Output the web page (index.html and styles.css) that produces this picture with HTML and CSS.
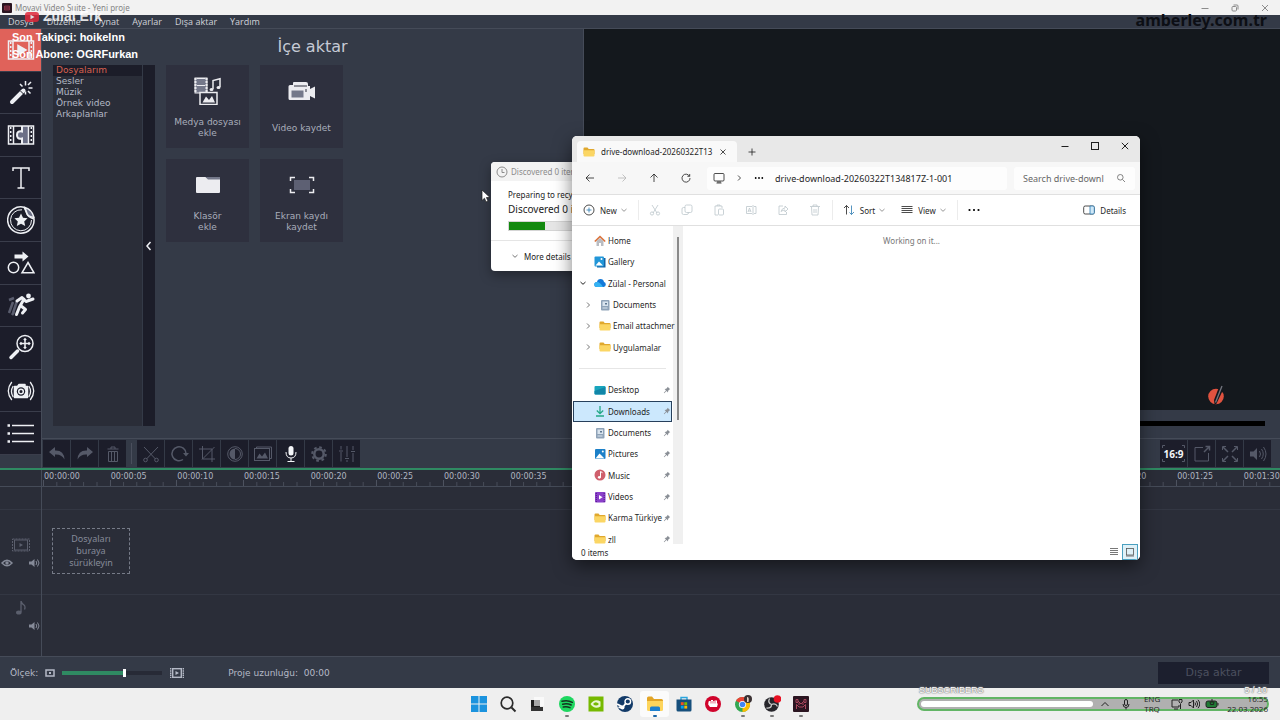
FILE: index.html
```html
<!DOCTYPE html>
<html lang="tr">
<head>
  <meta charset="UTF-8">
  <title>Movavi Video Suite - Yeni proje</title>
  <meta name="viewport" content="width=device-width, initial-scale=1.0">
  <link rel="stylesheet" href="styles.css">
</head>
<body>

  <!-- Shared icons -->
  <svg class="sprite" aria-hidden="true">
    <symbol id="folder" viewBox="0 0 12 12">
      <path d="M.5 2.500q0-1 1-1h3l1.200 1.500h4.800q1 0 1 1V8H.5z" fill="#e0a82e"/>
      <path d="M.5 4.200h11v5.300q0 1-1 1h-9q-1 0-1-1z" fill="#fbd664"/>
    </symbol>
    <symbol id="pin" viewBox="0 0 10 10">
      <path d="M5.800 1l3.200 3.200-1 .3-1.500 1.500-.3 2L4.400 6.300 1.500 9 1 8.500l2.700-2.900L2 3.800l2-.3 1.500-1.500z" fill="#8a8f96"/>
    </symbol>
    <symbol id="doc" viewBox="0 0 12 12">
      <rect x="2" y="1" width="8.500" height="10.500" rx="1" fill="#8fa3b8"/>
      <rect x="3.500" y="2.500" width="5.500" height="4.500" fill="#d9e4ee"/>
      <path d="M6 4h2v1.500H6z" fill="#5d7690"/>
      <path d="M3.500 9h5" stroke="#d9e4ee"/>
    </symbol>
    <symbol id="speaker" viewBox="0 0 12 10">
      <path d="M1 3.500h2.500L6.500 1v8L3.500 6.500H1z" fill="currentColor"/>
      <path d="M8 3q1.500 2 0 4M9.500 1.500q3 3.500 0 7" fill="none" stroke="currentColor"/>
    </symbol>
    <symbol id="chev-down" viewBox="0 0 8 8"><path d="M1.500 3L4 5.300 6.500 3" fill="none" stroke="currentColor"/></symbol>
    <symbol id="chev-right" viewBox="0 0 8 8"><path d="M3 1.500L5.500 4 3 6.500" fill="none" stroke="currentColor"/></symbol>
  </svg>

  <header class="titlebar">
    <svg class="app-icon" viewBox="0 0 10 10"><rect width="10" height="10" rx="1" fill="#2a1520"/><path d="M2.500 3h5v4h-5zM4 3v4M6 3v4M2.500 5h5" fill="none" stroke="#a43a52" stroke-width=".7"/></svg>
    <span class="titlebar-text">Movavi Video Suite - Yeni proje</span>
    <div class="window-buttons">
      <button aria-label="Minimize"><svg viewBox="0 0 8 8"><path d="M.5 4.500h7"/></svg></button>
      <button aria-label="Restore"><svg viewBox="0 0 8 8"><rect x="1" y="2.500" width="4.500" height="4.500" rx="1"/><path d="M2.500 1h3.500q1 0 1 1v3.500"/></svg></button>
      <button aria-label="Close"><svg viewBox="0 0 8 8"><path d="M1 1l6 6M7 1L1 7"/></svg></button>
    </div>
  </header>

  <nav class="menubar">
    <button>Dosya</button>
    <button>Düzenle</button>
    <button>Oynat</button>
    <button>Ayarlar</button>
    <button>Dışa aktar</button>
    <button>Yardım</button>
  </nav>

  <main class="workspace">
    <aside class="tools">
      <button class="tool active" aria-label="İçe aktar">
        <svg viewBox="0 0 28 28"><rect x="1.500" y="5" width="25" height="18"/><path d="M6 5v18M22 5v18"/><path d="M3.700 6v16M24.300 6v16" stroke-dasharray="2 2"/><path d="M11 9.500l8 4.500-8 4.500z" fill="currentColor"/></svg>
      </button>
      <button class="tool" aria-label="Filtreler">
        <svg viewBox="0 0 28 28"><path d="M5 24L16.500 12.500" stroke-width="4" stroke-linecap="round"/><path d="M13.500 13l3 3" stroke="#1c1d2a" stroke-width="1"/><path d="M18.500 3v4.500M18.500 13.500v3M13 6l2.500 2.500M24 4l-3 3M21.500 10h4M21 13l2.500 2.500"/></svg>
      </button>
      <button class="tool" aria-label="Geçişler">
        <svg viewBox="0 0 28 28"><path d="M14 5h8v18h-8v-5q-4 2-4.500-3.500Q10 9 14 11z" fill="#6b6f86" stroke="none"/><rect x="1.500" y="5" width="25" height="18"/><path d="M3.700 6v16M24.300 6v16" stroke-dasharray="2 2"/><path d="M6.500 5v18M21.500 5v18"/><path d="M15 5v5.500q-5-1-5 3.500t5 3.500V23" stroke-width="2"/></svg>
      </button>
      <button class="tool" aria-label="Başlıklar">
        <svg viewBox="0 0 28 28"><path d="M6 7V4h16v3M14 4v20M10.500 24h7"/></svg>
      </button>
      <button class="tool" aria-label="Çıkartmalar">
        <svg viewBox="0 0 28 28"><path d="M17 1.200A13.200 13.200 0 1 0 27 13q-6-2-7-5t-3-6.800z"/><path d="M15 3.800A10.500 10.500 0 1 0 24.500 14" stroke-width="1"/><path d="M18 1.500q7 2 9 10-6-1-7-4z" fill="#6b6f86"/><path d="M14 7.500l2 4.300 4.600.5-3.400 3.200 1 4.500-4.200-2.300L9.800 20l1-4.500-3.400-3.200 4.600-.5z" fill="currentColor" stroke="none"/></svg>
      </button>
      <button class="tool" aria-label="Çağrılar">
        <svg viewBox="0 0 28 28"><path d="M7.500 5.500h8V2.500l6 5-6 5V9.500h-8z" fill="currentColor" stroke="none"/><circle cx="6.500" cy="18.500" r="5.200"/><path d="M21 13.500l6 10.300H15z"/></svg>
      </button>
      <button class="tool" aria-label="Animasyon">
        <svg viewBox="0 0 28 28"><path d="M2 9l5-2M6 11L2 22M10 10L6 22M5 24l2-3" stroke="#5a5d6e" stroke-width="2.500"/><circle cx="21.500" cy="5" r="2.400" fill="currentColor" stroke="none"/><path d="M10 10l5-3.500 4 4 7-2.500M17 8l-4.500 8-3 7.500M13.500 14.500l5 4-3 3.500" stroke-width="3" stroke-linecap="round" stroke-linejoin="round"/></svg>
      </button>
      <button class="tool" aria-label="Yakınlaştır">
        <svg viewBox="0 0 28 28"><circle cx="18" cy="9.500" r="8"/><path d="M18 5v9M13.500 9.500h9M16.800 6L18 4.800 19.200 6M16.800 13l1.200 1.200 1.200-1.200M14.500 8.300L13.300 9.500l1.200 1.200M21.500 8.300l1.200 1.200-1.200 1.200"/><path d="M10.500 17L4 23.500" stroke-width="3.500" stroke-linecap="round"/></svg>
      </button>
      <button class="tool" aria-label="Sabitleme">
        <svg viewBox="0 0 28 28"><path d="M7.500 9.500h3L12 7.500h6v2h2.500v11h-13z" fill="currentColor" stroke-linejoin="round"/><circle cx="14" cy="14.500" r="4.200" fill="#1c1d2a" stroke="none"/><circle cx="14" cy="14.500" r="2.300"/><path d="M4.800 5q-7 9 0 18M6.200 9q-3.500 5.500 0 11M23.200 5q7 9 0 18M21.800 9q3.500 5.500 0 11" stroke-width="1.300"/></svg>
      </button>
      <button class="tool" aria-label="Daha fazla">
        <svg viewBox="0 0 28 28"><path d="M5 6.500h22M5 14.500h22M5 22.500h22"/><path d="M.5 6.500H3M.5 14.500H3M.5 22.500H3" stroke-width="2.500"/></svg>
      </button>
    </aside>

    <div class="content">
      <div class="panels">
        <section class="import-panel">
          <h1>İçe aktar</h1>
          <div class="import-body">
            <ul class="category-list">
              <li class="selected">Dosyalarım</li>
              <li>Sesler</li>
              <li>Müzik</li>
              <li>Örnek video</li>
              <li>Arkaplanlar</li>
            </ul>
            <button class="collapse" aria-label="Daralt"><svg viewBox="0 0 8 10"><path d="M5.500 1L2 5l3.500 4"/></svg></button>
            <div class="cards">
              <button class="card">
                <svg viewBox="0 0 28 28"><rect x="1" y="1" width="12" height="15" fill="#74788a"/><path d="M1.500 1v15M12.500 1v15" stroke-dasharray="2 1" stroke-width="2"/><path d="M3 8.500h8M3 1.500h8"/><path d="M19 12V3.500l7-1.800V10" stroke-width="1.500"/><path d="M15.500 12.500a2 1.600 0 1 0 4 0a2 1.600 0 1 0-4 0M22.500 10.500a2 1.600 0 1 0 4 0a2 1.600 0 1 0-4 0" fill="currentColor" stroke="none"/><rect x="6" y="15.500" width="17" height="12" fill="#2e303e" stroke-width="1.500"/><path d="M8.500 25.500l3.500-6 3 3.500 3-4 3 6.500z" fill="currentColor" stroke="none"/></svg>
                <span>Medya dosyası<br>ekle</span>
              </button>
              <button class="card">
                <svg viewBox="0 0 28 28"><path d="M2 8h3V6q0-1 1-1h12q2 0 2 2v2h2v3l5-2.500v12L22 19v4H2q-1.500 0-1.500-1.500V9.500Q.5 8 2 8z" fill="currentColor" stroke="none"/><rect x="3.500" y="13.500" width="12" height="7" fill="#74788a" stroke="none"/><path d="M6 9h13M18 12v3" stroke="#2e303e" stroke-width="1"/></svg>
                <span>Video kaydet</span>
              </button>
              <button class="card">
                <svg viewBox="0 0 28 28"><path d="M12 6h14v4H14z" fill="#74788a" stroke="none"/><path d="M2 7q0-1 1-1h8.500l2.500 2.500h12V21q0 1-1 1H3q-1 0-1-1z" fill="currentColor" stroke="none"/></svg>
                <span>Klasör<br>ekle</span>
              </button>
              <button class="card">
                <svg viewBox="0 0 28 28"><rect x="6" y="9" width="16" height="10" fill="#5d6073" stroke="none"/><path d="M2.500 10V6.500H7M21 6.500h4.500V10M25.500 18v3.500H21M7 21.500H2.500V18" stroke-width="1.500"/></svg>
                <span>Ekran kaydı<br>kaydet</span>
              </button>
            </div>
          </div>
        </section>

        <section class="preview">
          <div class="screen">
            <svg class="brand" viewBox="0 0 20 20"><circle cx="10" cy="11.500" r="7.800" fill="#e0523f"/><path d="M13 2L8 15l.5 4h1.800L17 5V0h-2z" fill="#14171d"/><path d="M16 1L9.500 17.500" stroke="#74777f" stroke-width="1.300"/></svg>
          </div>
          <div class="seek"><div class="seek-track"></div></div>
        </section>
      </div>

      <div class="toolbar">
        <button aria-label="Geri al"><svg viewBox="0 0 20 20"><path d="M2 8l6-5v3.500q9-.5 9.500 9Q14.500 10 8 10.500V13z" class="solid"/></svg></button>
        <button aria-label="Yinele"><svg viewBox="0 0 20 20"><path d="M18 8l-6-5v3.500q-9-.5-9.500 9Q5.500 10 12 10.500V13z" class="solid"/></svg></button>
        <button aria-label="Sil"><svg viewBox="0 0 20 20"><path d="M4.500 5h11M8 5V3h4v2M5.500 7.500v10h9v-10zM8.500 8v9M11.500 8v9"/></svg></button>
        <span class="divider"></span>
        <button aria-label="Böl"><svg viewBox="0 0 20 20"><path d="M3 3l11.500 12M17 3L5.500 15"/><circle cx="4.500" cy="16" r="1.800"/><circle cx="15.500" cy="16" r="1.800"/></svg></button>
        <button aria-label="Döndür"><svg viewBox="0 0 20 20"><path d="M14 15.500A7 7 0 1 1 17 9.500" stroke-width="1.500"/><path d="M14 9h6l-3 3.500z" class="solid"/></svg></button>
        <button aria-label="Kırp"><svg viewBox="0 0 20 20"><path d="M5.500 2v13H18M2 5h13v13M5 15.500L17.500 3"/></svg></button>
        <button aria-label="Renk ayarları"><svg viewBox="0 0 20 20"><circle cx="10" cy="10" r="7.300"/><path d="M10 4.500a5.500 5.500 0 0 0 0 11z" class="solid"/><path d="M10 4.500a5.500 5.500 0 0 1 0 11"/></svg></button>
        <button aria-label="Slayt"><svg viewBox="0 0 20 20"><rect x="1.500" y="4.500" width="15" height="12"/><path d="M3.500 4V3h15v11.500H17"/><path d="M3.500 14.500l3-5 2.500 3 3-4 3 6z" class="solid"/></svg></button>
        <button class="bright" aria-label="Ses kaydet"><svg viewBox="0 0 20 20"><rect x="7.500" y="2" width="5" height="9.500" rx="2.500" class="solid"/><path d="M5 8q0 6 5 6t5-6M10 14v3.500M6.500 17.500h7"/></svg></button>
        <button aria-label="Klip özellikleri"><svg viewBox="0 0 20 20"><circle cx="10" cy="10" r="4.700" stroke-width="2.500"/><circle cx="10" cy="10" r="6.800" stroke-width="2" stroke-dasharray="2.700 2.640"/></svg></button>
        <button aria-label="Ses ayarları"><svg viewBox="0 0 20 20"><path d="M4 2v3.500M4 8v9.500M10 2v11M10 16v2M16 2v4M16 9v9M2 7h4M8 14.500h4M14 7.500h4"/></svg></button>

        <div class="toolbar-right">
          <button class="ratio" aria-label="En boy oranı"><svg viewBox="0 0 27 27"><path d="M2.500 8V5.500H5M22 5.500h2.500V8M24.500 19v2.500H22M5 21.500H2.500V19"/></svg><span>16:9</span></button>
          <button aria-label="Ayır"><svg viewBox="0 0 20 20"><path d="M11 3.500H3v13.500h13.500V9"/><path d="M12 8l5-5M13.500 2.500h4v4" stroke-width="1.500"/></svg></button>
          <button aria-label="Tam ekran"><svg viewBox="0 0 20 20"><path d="M3 3l5 5M17 3l-5 5M3 17l5-5M17 17l-5-5" stroke-width="1.500"/><path d="M2.500 6v-3.500H6M14 2.500h3.500V6M17.500 14v3.500H14M6 17.500H2.500V14"/></svg></button>
          <button aria-label="Ses"><svg viewBox="0 0 20 20"><path d="M2 7.500h3.500L9 4v12l-3.500-3.500H2z" class="solid"/><path d="M11.500 7q2 3 0 6M13.500 5q3.500 5 0 10M15.500 3q5 7 0 14"/></svg></button>
        </div>
      </div>
    </div>
  </main>

  <section class="timeline">
    <div class="track-heads">
      <div class="head-ruler"></div>
      <div class="head-empty"></div>
      <div class="head head-video">
        <svg class="track-icon" viewBox="0 0 20 14"><rect x="1.500" y="1" width="17" height="12" fill="none" stroke="currentColor" stroke-dasharray="2 1"/><rect x="3.500" y="2" width="13" height="10" fill="none" stroke="currentColor"/><path d="M8.500 5l3.500 2-3.500 2z" fill="currentColor"/></svg>
        <div class="track-toggles">
          <button aria-label="Göster"><svg viewBox="0 0 12 10"><path d="M1 5q5-5.500 10 0-5 5.500-10 0z" fill="none" stroke="currentColor" stroke-width="1.500"/><circle cx="6" cy="5" r="1.700" fill="currentColor"/></svg></button>
          <button aria-label="Sesi kapat"><svg viewBox="0 0 12 10"><use href="#speaker"/></svg></button>
        </div>
      </div>
      <div class="head head-audio">
        <svg class="track-icon" viewBox="0 0 20 14"><path d="M10 11V0q.5 2.500 3.500 4.500 1 2 0 4" fill="none" stroke="currentColor" stroke-width="1.300"/><ellipse cx="7.800" cy="11.500" rx="2.800" ry="2" fill="currentColor"/></svg>
        <div class="track-toggles end">
          <button aria-label="Sesi kapat"><svg viewBox="0 0 12 10"><use href="#speaker"/></svg></button>
        </div>
      </div>
    </div>
    <div class="tracks">
      <div class="ruler">
        <span>00:00:00</span><span>00:00:05</span><span>00:00:10</span><span>00:00:15</span><span>00:00:20</span>
        <span>00:00:25</span><span>00:00:30</span><span>00:00:35</span><span>00:00:40</span><span>00:00:45</span>
        <span>00:00:50</span><span>00:00:55</span><span>00:01:00</span><span>00:01:05</span><span>00:01:10</span>
        <span>00:01:15</span><span>00:01:20</span><span>00:01:25</span><span>00:01:30</span>
      </div>
      <div class="track-empty"></div>
      <div class="track-video"><div class="dropzone">Dosyaları<br>buraya<br>sürükleyin</div></div>
      <div class="track-audio"></div>
    </div>
  </section>

  <footer class="statusbar">
    <label for="zoom">Ölçek:</label>
    <svg class="zoom-small" viewBox="0 0 10 8"><rect x="1" y="1" width="8" height="6" fill="none" stroke="currentColor" stroke-width="1.500"/><rect x="4" y="3" width="2" height="2" fill="currentColor"/></svg>
    <input type="range" id="zoom" min="0" max="100" value="63">
    <svg class="zoom-large" viewBox="0 0 14 10"><path d="M.7 0v10M13.300 0v10" stroke="currentColor" stroke-width="1.400" stroke-dasharray="1.500 .7"/><rect x="2.700" y=".7" width="8.600" height="8.600" fill="none" stroke="currentColor" stroke-width="1.400"/><path d="M5.500 3L9 5 5.500 7z" fill="currentColor"/></svg>
    <span class="duration">Proje uzunluğu:&nbsp; 00:00</span>
    <button class="export">Dışa aktar</button>
  </footer>

  <nav class="taskbar">
    <div class="apps">
      <button aria-label="Start"><svg viewBox="0 0 18 18"><path d="M1 1h7.500v7.500H1zM9.500 1H17v7.500H9.500zM1 9.500h7.500V17H1zM9.500 9.500H17V17H9.500z" fill="#1b93de"/></svg></button>
      <button aria-label="Search"><svg viewBox="0 0 18 18"><circle cx="8" cy="8" r="5.800" fill="none" stroke="#2b2b2b" stroke-width="1.700"/><path d="M12.500 12.500L16.500 16.500" stroke="#2b2b2b" stroke-width="1.900"/></svg></button>
      <button aria-label="Task view"><svg viewBox="0 0 18 18"><path d="M6 2h10v9H6z" fill="#f9f9f9"/><path d="M3 5h9v9H3z" fill="#1f1f1f"/><path d="M6 5h6v6H6z" fill="#a8a8a8"/><path d="M3 12h12v4H3z" fill="#333"/></svg></button>
      <button class="running" aria-label="Spotify"><svg viewBox="0 0 18 18"><circle cx="9" cy="9" r="8" fill="#1ed760"/><path d="M4 6.300q5.500-1.600 10.300 1M4.700 9.200q4.500-1.300 8.500.8M5.300 12q3.500-1 6.700.7" fill="none" stroke="#14331f" stroke-width="1.500" stroke-linecap="round"/></svg></button>
      <button aria-label="NVIDIA"><svg viewBox="0 0 18 18"><rect x="1.500" y="1.500" width="15" height="15" fill="#76b900"/><path d="M3.500 9q4-6 10-2.500v5Q7.500 15 3.500 9z" fill="#e8f5d0"/><path d="M6 9q2.500-3.500 6 0-3 3-6 0z" fill="#76b900"/></svg></button>
      <button aria-label="Steam"><svg viewBox="0 0 18 18"><circle cx="9" cy="9" r="8" fill="#123a68"/><circle cx="11.800" cy="6.500" r="2.800" fill="none" stroke="#fff" stroke-width="1.400"/><path d="M1 9l6 3 3-4M6.500 13.500l-4-1.500" fill="none" stroke="#fff" stroke-width="1.800"/><circle cx="6.500" cy="12.500" r="2" fill="#fff"/></svg></button>
      <button class="running current" aria-label="File Explorer"><svg viewBox="0 0 18 18"><path d="M1 3q0-1.500 1.500-1.500H6L8 4h7.500Q17 4 17 5.500V9H1z" fill="#e2a527"/><path d="M1 6h16v8.500q0 1.500-1.500 1.500h-13Q1 16 1 14.500z" fill="#fdd55d"/><path d="M4 16v-3q0-1.500 1.500-1.500h7q1.500 0 1.500 1.500v3z" fill="#1d80cf"/></svg></button>
      <button aria-label="Microsoft Store"><svg viewBox="0 0 18 18"><path d="M6 5V2.500h6V5" fill="none" stroke="#29a5de" stroke-width="1.400"/><path d="M1.500 4.500h15V15q0 1.500-1.500 1.500H3Q1.500 16.500 1.500 15z" fill="#164f7c"/><path d="M5.800 7.200h2.900v2.900H5.800z" fill="#f25022"/><path d="M9.300 7.200h2.900v2.900H9.300z" fill="#7fba00"/><path d="M5.800 10.700h2.900v2.900H5.800z" fill="#00a4ef"/><path d="M9.300 10.700h2.900v2.900H9.300z" fill="#ffb900"/></svg></button>
      <button aria-label="Game"><svg viewBox="0 0 18 18"><circle cx="9" cy="9" r="8" fill="#d0042c"/><path d="M4.500 7q0-1 1-1h1.500V5h2v1h1.500V5.500h2.500V8l.8 1-.8 3H6l-1.800-2.500z" fill="#fff"/><path d="M7 6v2.500M9 6v2.500M11 6v2.500" stroke="#d0042c" stroke-width=".6"/></svg></button>
      <button class="running" aria-label="Chrome"><svg viewBox="0 0 18 18"><circle cx="8.500" cy="9.500" r="7.500" fill="#34a853"/><path d="M8.500 9.500L2 5.700A7.500 7.500 0 0 1 15 5.700z" fill="#ea4335"/><path d="M8.500 9.500L15 5.700A7.500 7.500 0 0 1 8.500 17z" fill="#fbbc05"/><circle cx="8.500" cy="9.500" r="3.600" fill="#fff"/><circle cx="8.500" cy="9.500" r="2.800" fill="#4285f4"/><circle cx="14" cy="4" r="4" fill="#3b3234"/><path d="M13 2q2.500 0 1.500 5h-1.500z" fill="#e6d4c8"/></svg></button>
      <button class="running" aria-label="OBS Studio"><svg viewBox="0 0 18 18"><circle cx="8.500" cy="9.500" r="7.300" fill="#26252b"/><path d="M8.500 9.500q-4-1.500-2-6M8.500 9.500q4-2 6 2M8.500 9.500q0 4-5 3.500" fill="none" stroke="#c8c8c8" stroke-width="1.300"/><circle cx="14.500" cy="4" r="3.800" fill="#e81123"/></svg></button>
      <button class="running" aria-label="Movavi"><svg viewBox="0 0 18 18"><rect x="1" y="1" width="16" height="16" rx="1" fill="#2b1521"/><path d="M4 4.500h2v3H4zM12 4.500h2v3h-2zM6 6l3 3 3-3M4.500 14V9.500L7 12h4l2.500-2.500V14M7 8v2M11 8v2" fill="none" stroke="#a8465c"/></svg></button>
    </div>
    <div class="tray">
      <button aria-label="Hidden icons"><svg viewBox="0 0 12 12"><path d="M2.500 8L6 4.500 9.500 8"/></svg></button>
      <button aria-label="Microphone"><svg viewBox="0 0 12 12"><rect x="4.500" y="1.500" width="3" height="6" rx="1.500"/><path d="M3 6q0 3.500 3 3.500T9 6M6 9.500v2"/></svg></button>
      <span class="language">ENG<br>TRQ</span>
      <button aria-label="Network"><svg viewBox="0 0 12 12"><path d="M7 2H1v7h7V7M3 11h4M9.500 11V6M8 1.500v2.500q1.500 2.500 3 0V1.500z"/></svg></button>
      <button aria-label="Volume"><svg viewBox="0 0 12 12"><path d="M1 4.500h2L5.500 2v8L3 7.500H1zM7 4.500q1 1.500 0 3M8.500 3q2.300 3 0 6M10 1.800q3.500 4.200 0 8.400"/></svg></button>
      <button class="battery" aria-label="Battery"><svg viewBox="0 0 14 12"><rect x="1" y="3" width="11" height="6.500" rx="2" fill="#1f7a34"/><path d="M13 5v2.500M7 1v3M5 4h4l-.5 2.500h-3z"/></svg></button>
      <span class="clock">16:55<br>22.03.2026</span>
    </div>
  </nav>

  <!-- Progress dialog -->
  <section class="dialog" lang="en">
    <div class="dialog-title">
      <svg viewBox="0 0 12 12"><circle cx="6" cy="6" r="5"/><path d="M6 3v3.500h2.500"/></svg>
      <span>Discovered 0 items...</span>
    </div>
    <div class="dialog-body">
      <p>Preparing to recycle</p>
      <p class="big">Discovered 0 items</p>
      <div class="progress"><div class="progress-fill"></div></div>
    </div>
    <button class="dialog-more"><svg viewBox="0 0 8 8"><use href="#chev-down"/></svg>More details</button>
  </section>

  <!-- File explorer window -->
  <section class="explorer" lang="en">
    <div class="ex-tabs">
      <div class="ex-tab">
        <svg class="i12" viewBox="0 0 12 12"><use href="#folder"/></svg>
        <span>drive-download-20260322T13</span>
        <button aria-label="Close tab"><svg class="line" viewBox="0 0 8 8"><path d="M1.500 1.500l5 5M6.500 1.500l-5 5"/></svg></button>
      </div>
      <button class="ex-new-tab" aria-label="New tab"><svg class="line" viewBox="0 0 8 8"><path d="M4 .5v7M.5 4h7"/></svg></button>
      <div class="ex-window-buttons">
        <button aria-label="Minimize"><svg class="line" viewBox="0 0 8 8"><path d="M.5 4.500h7"/></svg></button>
        <button aria-label="Maximize"><svg class="line" viewBox="0 0 8 8"><rect x=".5" y=".5" width="7" height="7"/></svg></button>
        <button aria-label="Close"><svg class="line" viewBox="0 0 8 8"><path d="M.8.8l6.400 6.400M7.200.8L.8 7.200"/></svg></button>
      </div>
    </div>

    <div class="ex-nav">
      <button aria-label="Back"><svg class="line" viewBox="0 0 10 10"><path d="M9 5H1M4.500 1.500L1 5l3.500 3.500"/></svg></button>
      <button class="faded" aria-label="Forward"><svg class="line" viewBox="0 0 10 10"><path d="M1 5h8M5.500 1.500L9 5 5.500 8.500"/></svg></button>
      <button aria-label="Up"><svg class="line" viewBox="0 0 10 10"><path d="M5 9V1M1.500 4.500L5 1l3.500 3.500"/></svg></button>
      <button aria-label="Refresh"><svg class="line" viewBox="0 0 10 10"><path d="M8.500 3.200A4 4 0 1 0 9 5M8.700 1v2.300H6.400"/></svg></button>
      <div class="address">
        <svg class="line pc" viewBox="0 0 12 12"><rect x="1" y="1.500" width="10" height="7.500" rx="1"/><path d="M3.500 11h5M5 9v2M7 9v2"/></svg>
        <svg class="line sep" viewBox="0 0 8 8"><use href="#chev-right"/></svg>
        <svg class="dots" viewBox="0 0 10 4"><circle cx="1.700" cy="2" r=".9"/><circle cx="5" cy="2" r=".9"/><circle cx="8.300" cy="2" r=".9"/></svg>
        <span>drive-download-20260322T134817Z-1-001</span>
      </div>
      <div class="search">
        <input type="search" aria-label="Search" placeholder="Search drive-downl">
        <svg class="line" viewBox="0 0 10 10"><circle cx="4.300" cy="4.300" r="2.800"/><path d="M6.500 6.500l2.500 2.500"/></svg>
      </div>
    </div>

    <div class="ex-commands">
      <button class="cmd"><svg class="line" viewBox="0 0 12 12"><circle cx="6" cy="6" r="5"/><path d="M6 3.500v5M3.500 6h5" stroke="#2a7ab0"/></svg>New<svg class="chev" viewBox="0 0 8 8"><use href="#chev-down"/></svg></button>
      <span class="cmd-divider"></span>
      <button class="cmd-icon" aria-label="Cut"><svg class="line" viewBox="0 0 12 12"><path d="M3 1l5 8M9 1L4 9"/><circle cx="3" cy="9.500" r="1.600"/><circle cx="9" cy="9.500" r="1.600"/></svg></button>
      <button class="cmd-icon" aria-label="Copy"><svg class="line" viewBox="0 0 12 12"><rect x="4" y="1" width="7" height="7.500" rx="1.500"/><path d="M4 3.500H2.500Q1 3.500 1 5v4q0 1.500 1.500 1.500H6Q7.500 10.500 7.500 8.500"/></svg></button>
      <button class="cmd-icon" aria-label="Paste"><svg class="line" viewBox="0 0 12 12"><path d="M5 11H2V2h7v2M4 2V1h3v1"/><rect x="5.500" y="5" width="5" height="6" rx="1"/></svg></button>
      <button class="cmd-icon" aria-label="Rename"><svg class="line" viewBox="0 0 12 12"><path d="M7 2.500H1.500v7H7M9 2.500h2v7H9M8 1v10M3 8l1.500-4L6 8M3.500 7h2"/></svg></button>
      <button class="cmd-icon" aria-label="Share"><svg class="line" viewBox="0 0 12 12"><path d="M6 2H2v8.500h7.500V8M4 7.500q1-3.500 4-3.500V2l3 3-3 3V6Q6 6 4 7.500z"/></svg></button>
      <button class="cmd-icon" aria-label="Delete"><svg class="line" viewBox="0 0 12 12"><path d="M1 2.500h10M4 2.500V1h4v1.500M2.500 3l.5 8h6l.5-8M5 5v4M7 5v4"/></svg></button>
      <span class="cmd-divider"></span>
      <button class="cmd sort"><svg class="line" viewBox="0 0 12 12"><path d="M3.500 10.500v-9M1 4l2.500-2.500L6 4"/><path d="M8.500 1.500v9M6.500 8.500l2 2 2.500-2.500" stroke="#2a7ab0"/></svg>Sort<svg class="chev" viewBox="0 0 8 8"><use href="#chev-down"/></svg></button>
      <button class="cmd view"><svg class="line" viewBox="0 0 12 12"><path d="M.5 2.500h11M.5 4.500h11M.5 6.500h11M.5 8.500h11"/></svg>View<svg class="chev" viewBox="0 0 8 8"><use href="#chev-down"/></svg></button>
      <span class="cmd-divider"></span>
      <button class="cmd-icon more" aria-label="See more"><svg viewBox="0 0 12 12"><circle cx="1.500" cy="6" r="1.100"/><circle cx="6" cy="6" r="1.100"/><circle cx="10.500" cy="6" r="1.100"/></svg></button>
      <button class="cmd details"><svg class="line" viewBox="0 0 12 12"><rect x=".7" y="2" width="10.600" height="8" rx="1.500"/><path d="M7 2h3q1.300 0 1.300 1.500v5Q11.300 10 10 10H7z" fill="#cfe8f8" stroke="#2a7ab0"/></svg>Details</button>
    </div>

    <div class="ex-body">
      <ul class="ex-tree">
        <li><svg class="i12" viewBox="0 0 12 12"><path d="M2.500 6v5H5V8h2v3h2.500V6L6 3z" fill="#b9bcc2"/><path d="M.8 6.500L6 1.500l5.200 5" fill="none" stroke="#d9713a" stroke-width="1.600"/></svg><span>Home</span></li>
        <li><svg class="i12" viewBox="0 0 12 12"><path d="M3 2h8.500v9.500H3z" fill="#1363a5"/><rect x=".5" y=".5" width="9.500" height="10" rx="1" fill="#2196d8"/><path d="M1.500 9.500l3.500-4 4 4z" fill="#fff"/><circle cx="7.500" cy="3" r="1" fill="#fff"/></svg><span>Gallery</span></li>
        <li><svg class="twist dark" viewBox="0 0 8 8"><use href="#chev-down"/></svg><svg class="i12" viewBox="0 0 12 12"><path d="M3 10Q.3 10 .3 7.500T3 5q.5-3 3.500-3T10 5q1.800.3 1.800 2.500T9.500 10z" fill="#1479d8"/><path d="M3 10Q.3 10 .3 7.500T3 5q3 0 6 5z" fill="#35b3f3"/></svg><span>Zülal - Personal</span></li>
        <li class="child"><svg class="twist" viewBox="0 0 8 8"><use href="#chev-right"/></svg><svg class="i12" viewBox="0 0 12 12"><use href="#doc"/></svg><span>Documents</span></li>
        <li class="child"><svg class="twist" viewBox="0 0 8 8"><use href="#chev-right"/></svg><svg class="i12" viewBox="0 0 12 12"><use href="#folder"/></svg><span>Email attachmer</span></li>
        <li class="child"><svg class="twist" viewBox="0 0 8 8"><use href="#chev-right"/></svg><svg class="i12" viewBox="0 0 12 12"><use href="#folder"/></svg><span>Uygulamalar</span></li>
        <li class="tree-divider"></li>
        <li><svg class="i12" viewBox="0 0 12 12"><rect x=".5" y="2" width="11" height="8.500" rx="1" fill="#18a5bd"/><path d="M.5 7l11-4v6.500q0 1-1 1h-9q-1 0-1-1z" fill="#1186a8"/></svg><span>Desktop</span><svg class="pin" viewBox="0 0 10 10"><use href="#pin"/></svg></li>
        <li class="selected"><svg class="i12" viewBox="0 0 12 12"><path d="M6 1v7.500M2.800 5.500L6 8.700l3.200-3.200M2 11h8" fill="none" stroke="#23a886" stroke-width="1.300"/></svg><span>Downloads</span><svg class="pin" viewBox="0 0 10 10"><use href="#pin"/></svg></li>
        <li><svg class="i12" viewBox="0 0 12 12"><use href="#doc"/></svg><span>Documents</span><svg class="pin" viewBox="0 0 10 10"><use href="#pin"/></svg></li>
        <li><svg class="i12" viewBox="0 0 12 12"><rect x="1" y="1" width="10.500" height="10" rx="1" fill="#1c80c8"/><path d="M1.500 10.500l4-5 5 5z" fill="#fff"/><circle cx="8.800" cy="3.500" r="1" fill="#fff"/></svg><span>Pictures</span><svg class="pin" viewBox="0 0 10 10"><use href="#pin"/></svg></li>
        <li><svg class="i12" viewBox="0 0 12 12"><circle cx="6" cy="6" r="5.500" fill="#cf5f6c"/><path d="M6.500 8.500v-6l2 1.200" fill="none" stroke="#fff"/><circle cx="5.300" cy="8.300" r="1.400" fill="#fff"/></svg><span>Music</span><svg class="pin" viewBox="0 0 10 10"><use href="#pin"/></svg></li>
        <li><svg class="i12" viewBox="0 0 12 12"><rect x="1" y="1" width="10.500" height="10.500" rx="1" fill="#8a3fc9"/><path d="M2.300 2v9M10.200 2v9" stroke="#4e1d85" stroke-dasharray="1 1"/><path d="M5 4l3.500 2.200L5 8.500z" fill="#fff"/></svg><span>Videos</span><svg class="pin" viewBox="0 0 10 10"><use href="#pin"/></svg></li>
        <li><svg class="i12" viewBox="0 0 12 12"><use href="#folder"/></svg><span>Karma Türkiye</span><svg class="pin" viewBox="0 0 10 10"><use href="#pin"/></svg></li>
        <li><svg class="i12" viewBox="0 0 12 12"><use href="#folder"/></svg><span>zll</span><svg class="pin" viewBox="0 0 10 10"><use href="#pin"/></svg></li>
      </ul>
      <div class="ex-scroll"><div class="ex-thumb"></div></div>
      <div class="ex-files">Working on it...</div>
    </div>

    <div class="ex-status">
      <span>0 items</span>
      <button aria-label="List view"><svg class="line" viewBox="0 0 10 10"><path d="M1 1.500h8M1 3.500h8M1 5.500h8M1 7.500h8"/></svg></button>
      <button class="on" aria-label="Icon view"><svg class="line" viewBox="0 0 10 10"><rect x="1.500" y="1.500" width="7" height="6.500"/><path d="M1 9h8"/></svg></button>
    </div>
  </section>

  <!-- Stream overlay -->
  <div class="stream-name">
    <svg viewBox="0 0 14 10"><rect width="14" height="10" rx="3" fill="#e0283a"/><path d="M5.500 2.700L9.500 5l-4 2.300z" fill="#fff"/></svg>
    <span>Zülal Erk</span>
  </div>
  <div class="stream-events">
    <p>Son Takipçi: hoikelnn</p>
    <p>Son Abone: OGRFurkan</p>
  </div>
  <div class="stream-site">amberley.com.tr</div>
  <div class="stream-goal">
    <div class="goal-text"><span>SUBSCRIBERS</span><span>5 / 10</span></div>
    <div class="goal-bar"><div class="goal-fill"></div></div>
  </div>

  <svg class="cursor" viewBox="0 0 10 14"><path d="M1 1v10.500l2.500-2.300L5 13l2-1-1.600-3.500H9z" fill="#fff" stroke="#1b1b1b" stroke-width=".7"/></svg>

</body>
</html>
```
FILE: styles.css
```css
* {
  box-sizing: border-box;
}

body {
  margin: 0;
  height: 100vh;
  display: flex;
  flex-direction: column;
  overflow: hidden;
  position: relative;
  background: #343a47;
  color: #b4b9c6;
  font-family: "DejaVu Sans", sans-serif;
  font-size: 9px;
}

button {
  margin: 0;
  padding: 0;
  border: none;
  background: none;
  color: inherit;
  font: inherit;
}

ul, p, h1 {
  margin: 0;
  padding: 0;
  list-style: none;
}

svg {
  display: block;
  flex: none;
}

.sprite {
  position: absolute;
  width: 0;
  height: 0;
}

/* Title bar and menu */
.titlebar {
  display: flex;
  align-items: center;
  gap: 3px;
  height: 15px;
  padding: 0 0 0 2px;
  background: #f2f2f2;
  color: #858585;
  font-family: "Noto Sans", sans-serif;
  font-size: 8px;
}

.app-icon {
  width: 10px;
  height: 10px;
}

.window-buttons {
  display: flex;
  margin-left: auto;
}

.window-buttons button {
  display: flex;
  justify-content: center;
  width: 30px;
}

.window-buttons svg {
  width: 8px;
  height: 8px;
  fill: none;
  stroke: #8c8c8c;
}

.menubar {
  display: flex;
  gap: 13px;
  height: 14px;
  padding-left: 8px;
  border-bottom: 1px solid #454b58;
  color: #d0d3da;
  font-family: "Open Sans", sans-serif;
  font-size: 9px;
  line-height: 14px;
}

/* Tools down the left edge */
.workspace {
  display: flex;
  flex: none;
  height: 439px;
}

.tools {
  display: flex;
  flex-direction: column;
  width: 41px;
  height: 426px;
  background: #1c1d2a;
}

.tool {
  display: flex;
  flex: 1;
  align-items: center;
  justify-content: center;
  border-bottom: 1px solid #3a3d4b;
  color: #eef0f4;
}

.tool.active {
  background: #e0625a;
}

.tool svg {
  width: 28px;
  height: 28px;
  fill: none;
  stroke: currentColor;
  stroke-width: 1.5;
}

.content {
  display: flex;
  flex: 1;
  flex-direction: column;
  border-left: 1px solid #454b58;
}

.panels {
  display: flex;
  flex: 1;
}

/* Import panel */
.import-panel {
  display: flex;
  flex-direction: column;
  width: 542px;
  padding: 0 11px 12px;
  border-right: 1px solid #454b58;
}

.import-panel h1 {
  color: #c6cad5;
  font-size: 16px;
  font-weight: normal;
  line-height: 36px;
  text-align: center;
}

.import-body {
  display: flex;
  flex: 1;
}

.category-list {
  width: 89px;
  background: #2a2d38;
  font-size: 9px;
  line-height: 11px;
}

.category-list li {
  padding-left: 3px;
}

.category-list .selected {
  background: #1c1d29;
  color: #d9604f;
}

.collapse {
  display: flex;
  align-items: center;
  justify-content: center;
  width: 12px;
  margin-left: 1px;
  background: #1c1d29;
}

.collapse svg {
  width: 8px;
  height: 10px;
  fill: none;
  stroke: #eef0f4;
  stroke-width: 1.5;
}

.cards {
  display: grid;
  grid-template-columns: 83px 83px;
  grid-auto-rows: 83px;
  gap: 11px;
  margin-left: 11px;
}

.card {
  display: flex;
  flex-direction: column;
  align-items: center;
  gap: 11px;
  padding-top: 12px;
  background: #2e303e;
  color: #a9aebb;
  font-size: 9px;
  line-height: 11px;
}

.card svg {
  width: 28px;
  height: 28px;
  color: #ececf0;
  fill: none;
  stroke: currentColor;
}

.card span {
  display: flex;
  flex-direction: column;
  justify-content: center;
  height: 24px;
  text-align: center;
}

/* Preview */
.preview {
  display: flex;
  flex: 1;
  flex-direction: column;
}

.screen {
  display: flex;
  flex: 1;
  align-items: flex-end;
  justify-content: flex-end;
  padding: 5px 54px;
  background: #14181d;
}

.brand {
  width: 20px;
  height: 20px;
}

.seek {
  padding: 11px 15px 12px;
}

.seek-track {
  height: 5px;
  background: #000;
}

/* Toolbar above the timeline */
.toolbar {
  display: flex;
  gap: 1px;
  height: 30px;
  padding: 1px 9px 1px 1px;
  border-top: 1px solid #454b58;
}

.toolbar button {
  display: flex;
  align-items: center;
  justify-content: center;
  width: 27px;
  height: 27px;
  background: #1c1d2a;
  color: #555968;
}

.toolbar svg {
  width: 20px;
  height: 20px;
  fill: none;
  stroke: currentColor;
}

.toolbar .solid {
  fill: currentColor;
  stroke: none;
}

.toolbar .bright {
  color: #f4f5f8;
}

.toolbar .ratio {
  display: grid;
  place-items: center;
  font-family: "Noto Sans", sans-serif;
  font-size: 10px;
  font-weight: bold;
}

.ratio svg,
.ratio span {
  grid-area: 1 / 1;
}

.toolbar .ratio svg {
  width: 27px;
  height: 27px;
}

.ratio span {
  color: #f4f5f8;
}

.divider {
  width: 1px;
  height: 21px;
  margin: 3px 4px;
  background: #4a4f5d;
}

.toolbar-right {
  display: flex;
  gap: 1px;
  margin-left: auto;
}

/* Timeline */
.timeline {
  display: flex;
  flex: 1;
  border-top: 2px solid #2f8a62;
  border-bottom: 1px solid #454b58;
  background: #2a2d38;
}

.track-heads {
  display: flex;
  flex-direction: column;
  width: 42px;
  border-right: 1px solid #454b58;
  color: #5b5f6d;
}

.tracks {
  display: flex;
  flex: 1;
  flex-direction: column;
  min-width: 0;
}

.head-ruler,
.ruler {
  height: 17px;
  border-bottom: 1px solid #454b58;
}

.head-empty,
.track-empty {
  height: 23px;
  border-bottom: 1px solid #333743;
}

.head-video,
.track-video {
  height: 85px;
  border-bottom: 1px solid #333743;
}

.head {
  display: flex;
  flex-direction: column;
  align-items: center;
}

.head-video {
  gap: 6px;
  padding-top: 28px;
}

.head-audio {
  gap: 6px;
  padding-top: 6px;
}

.track-icon {
  width: 20px;
  height: 14px;
}

.track-toggles {
  display: flex;
  justify-content: space-between;
  width: 100%;
  padding: 0 1px;
  color: #858a98;
}

.track-toggles.end {
  justify-content: flex-end;
}

.track-toggles svg {
  width: 12px;
  height: 10px;
}

.ruler {
  display: flex;
  overflow: hidden;
  color: #b0b5c1;
  font-size: 8px;
  line-height: 14px;
}

.ruler span {
  flex: none;
  width: 5.385%;
  padding-left: 2px;
  background:
    linear-gradient(#4d525f, #4d525f) 1px 100% / 1px 6px no-repeat,
    linear-gradient(to right, transparent 1px, #474c59 1px, #474c59 2px, transparent 2px) 0 100% / 20% 4px repeat-x;
}

.track-video {
  padding: 18px 10px;
}

.dropzone {
  width: 78px;
  height: 46px;
  padding-top: 4px;
  border: 1px dashed #767b88;
  color: #868b98;
  font-family: "Noto Sans", sans-serif;
  font-size: 9px;
  line-height: 12px;
  text-align: center;
}

/* Status bar */
.statusbar {
  display: flex;
  align-items: center;
  height: 31px;
  padding: 0 11px 0 10px;
}

.zoom-small {
  width: 10px;
  height: 8px;
  margin: 0 7px;
}

.zoom-large {
  width: 14px;
  height: 10px;
  margin-left: 8px;
}

#zoom {
  -webkit-appearance: none;
  appearance: none;
  width: 100px;
  height: 4px;
  margin: 0;
  background: linear-gradient(to right, #2f8a62 63%, #272a36 63%);
}

#zoom::-webkit-slider-thumb {
  -webkit-appearance: none;
  width: 3px;
  height: 8px;
  background: #fff;
}

.duration {
  margin-left: 44px;
}

.export {
  width: 111px;
  height: 22px;
  margin-left: auto;
  background: #1c1f2e;
  color: #4b4f5e;
  font-size: 11px;
}

/* Windows taskbar */
.taskbar {
  display: flex;
  align-items: center;
  justify-content: center;
  height: 32px;
  position: relative;
  background: #efefef;
  color: #222;
}

.apps {
  display: flex;
  width: 352px;
}

.apps button {
  display: flex;
  flex: 1;
  align-items: center;
  justify-content: center;
  height: 26px;
  border-radius: 3px;
  position: relative;
}

.apps svg {
  width: 18px;
  height: 18px;
}

.apps .current {
  background: #fbfbfb;
}

.apps .running::after {
  content: "";
  position: absolute;
  bottom: 0;
  left: 50%;
  width: 4px;
  height: 2px;
  margin-left: -2px;
  border-radius: 1px;
  background: #7a7a7a;
}

.apps .current::after {
  background: #1a66a8;
}

.tray {
  display: flex;
  align-items: center;
  position: absolute;
  right: 12px;
  z-index: 3;
  font-family: "Open Sans", sans-serif;
  font-size: 8px;
  line-height: 10px;
}

.tray button {
  margin-right: 5px;
}

.tray button:first-child {
  margin-right: 9px;
}

.tray svg {
  width: 12px;
  height: 12px;
  fill: none;
  stroke: #222;
}

.tray .battery {
  margin-right: 8px;
}

.tray .battery svg {
  width: 14px;
}

.language {
  margin: 0 11px 0 7px;
  text-align: center;
}

.clock {
  text-align: right;
}

/* Progress dialog */
.dialog {
  position: absolute;
  top: 162px;
  left: 491px;
  width: 240px;
  border-radius: 4px;
  background: #fff;
  box-shadow: 0 4px 12px rgba(0,0,0,0.35);
  color: #222;
  font-family: "Noto Sans", sans-serif;
  font-size: 8px;
  overflow: hidden;
}

.dialog-title {
  display: flex;
  align-items: center;
  gap: 3px;
  height: 19px;
  padding-left: 5px;
  background: #f3f3f3;
  color: #8c8c8c;
}

.dialog-title svg {
  width: 12px;
  height: 12px;
  fill: none;
  stroke: #8c8c8c;
}

.dialog-body {
  height: 60px;
  padding: 8px 17px;
  border-bottom: 1px solid #e5e5e5;
  line-height: 12px;
}

.dialog-body .big {
  font-size: 10px;
  line-height: 16px;
}

.progress {
  height: 10px;
  margin-top: 4px;
  border: 1px solid #d5d5d5;
  background: #e6e6e6;
}

.progress-fill {
  width: 36px;
  height: 8px;
  background: #12890f;
}

.dialog-more {
  display: flex;
  align-items: center;
  gap: 5px;
  height: 30px;
  padding-left: 20px;
}

.dialog-more svg {
  width: 8px;
  height: 8px;
  color: #777;
}

/* File explorer */
.explorer {
  display: flex;
  flex-direction: column;
  position: absolute;
  top: 136px;
  left: 572px;
  width: 568px;
  height: 424px;
  border-radius: 5px;
  background: #fff;
  box-shadow: 0 6px 18px rgba(0,0,0,0.5);
  color: #1f1f1f;
  font-family: "Noto Sans", sans-serif;
  font-size: 8px;
  overflow: hidden;
}

.line {
  fill: none;
  stroke: currentColor;
  stroke-width: 0.8;
}

.i12 {
  width: 12px;
  height: 12px;
}

.ex-tabs {
  display: flex;
  align-items: center;
  height: 26px;
  background: #e8e8e8;
}

.ex-tab {
  display: flex;
  align-items: center;
  align-self: flex-end;
  gap: 6px;
  width: 160px;
  height: 21px;
  margin-left: 5px;
  padding: 0 10px 0 6px;
  border-radius: 4px 4px 0 0;
  background: #f9f9f9;
}

.ex-tab span {
  flex: 1;
  white-space: nowrap;
}

.ex-tabs svg.line {
  width: 8px;
  height: 8px;
}

.ex-new-tab {
  margin: 5px 0 0 11px;
}

.ex-window-buttons {
  display: flex;
  align-self: flex-start;
  margin-left: auto;
}

.ex-window-buttons button {
  display: flex;
  align-items: center;
  justify-content: center;
  width: 30px;
  height: 19px;
}

.ex-window-buttons .line {
  stroke-width: 1;
}

.ex-nav {
  display: flex;
  align-items: center;
  height: 33px;
  padding: 0 5px 0 13px;
  border-bottom: 1px solid #e0e0e0;
  background: #f7f7f7;
  font-size: 9px;
}

.ex-nav button {
  margin-right: 22px;
}

.ex-nav button svg {
  width: 10px;
  height: 10px;
}

.ex-nav .faded {
  color: #b4b4b4;
}

.address {
  display: flex;
  flex: 1;
  align-items: center;
  height: 23px;
  margin-left: -6px;
  padding-left: 6px;
  border-radius: 3px;
  background: #fdfdfd;
}

.pc {
  width: 12px;
  height: 12px;
}

.sep {
  width: 8px;
  height: 8px;
  margin: 0 11px 0 10px;
}

.dots {
  width: 10px;
  height: 4px;
  margin-right: 11px;
}

.search {
  display: flex;
  align-items: center;
  width: 121px;
  height: 23px;
  margin-left: 7px;
  padding: 0 9px;
  border-radius: 3px;
  background: #fdfdfd;
  color: #666;
}

.search input {
  flex: 1;
  min-width: 0;
  padding: 0;
  border: none;
  outline: none;
  background: none;
  font: inherit;
}

.search input::placeholder {
  color: #666;
}

.search svg {
  width: 10px;
  height: 10px;
}

.ex-commands {
  display: flex;
  align-items: center;
  height: 31px;
  padding: 0 14px 0 11px;
  border-bottom: 1px solid #e0e0e0;
}

.cmd {
  display: flex;
  align-items: center;
  gap: 5px;
}

.ex-commands svg {
  width: 12px;
  height: 12px;
}

.ex-commands .chev {
  width: 8px;
  height: 8px;
  margin-left: -2px;
  color: #999;
}

.cmd-divider {
  width: 1px;
  height: 20px;
  margin: 0 10px;
  background: #ececec;
}

.cmd-icon {
  margin-right: 20px;
  color: #bcc6cc;
}

.cmd-icon + .cmd-divider {
  margin-left: -9px;
}

.cmd.view {
  margin-left: 15px;
}

.cmd-icon.more {
  color: #222;
}

.details {
  margin-left: auto;
}

.ex-body {
  display: flex;
  flex: 1;
  min-height: 0;
}

.ex-tree {
  display: grid;
  grid-auto-rows: 1fr;
  flex: none;
  width: 101px;
  height: 320px;
  margin-top: 4px;
}

.ex-tree li {
  display: flex;
  align-items: center;
  gap: 2px;
  min-width: 0;
  margin: 0 1px;
  padding-left: 20px;
  border: 1px solid transparent;
  position: relative;
}

.ex-tree li.child {
  padding-left: 25px;
}

.ex-tree span {
  flex: 1;
  min-width: 0;
  white-space: nowrap;
}

.twist {
  position: absolute;
  left: 5px;
  width: 8px;
  height: 8px;
  color: #777;
}

.child .twist {
  left: 10px;
}

.twist.dark {
  color: #222;
}

.ex-tree .selected {
  border-color: #27405c;
  background: #cce8fd;
}

.ex-tree .tree-divider {
  height: 1px;
  margin: 10px 7px;
  padding: 0;
  border: none;
  background: #e6e6e6;
}

.pin {
  width: 8px;
  height: 8px;
}

.ex-scroll {
  width: 10px;
  background: #f0f0f0;
}

.ex-thumb {
  width: 2px;
  height: 183px;
  margin: 11px 0 0 4px;
  background: #8a8a8a;
}

.ex-files {
  flex: 1;
  padding-top: 9px;
  color: #777;
  text-align: center;
}

.ex-status {
  display: flex;
  align-items: center;
  height: 16px;
  padding: 0 2px 0 9px;
  position: relative;
  background: #fff;
}

.ex-status span {
  flex: 1;
}

.ex-status button {
  display: flex;
  align-items: center;
  justify-content: center;
  width: 16px;
  height: 16px;
  color: #555;
}

.ex-status svg {
  width: 10px;
  height: 10px;
}

.ex-status .on {
  border: 1px solid #4aa0c0;
  background: #dff1f8;
}

/* Stream overlay */
.stream-name {
  display: flex;
  gap: 4px;
  position: absolute;
  top: 8px;
  left: 25px;
  color: #fff;
  font-family: "Liberation Sans", sans-serif;
  font-size: 14px;
  font-weight: bold;
  line-height: 16px;
  opacity: 0.85;
}

.stream-name svg {
  width: 14px;
  height: 10px;
  margin-top: 4px;
}

.stream-events {
  position: absolute;
  top: 29px;
  left: 12px;
  color: #fff;
  font-family: "Liberation Sans", sans-serif;
  font-size: 11px;
  font-weight: bold;
  line-height: 17px;
}

.stream-site {
  position: absolute;
  top: 10px;
  right: 13px;
  color: #0c0e14;
  font-family: "Noto Sans", sans-serif;
  font-size: 16px;
  font-weight: bold;
  line-height: 20px;
}

.stream-goal {
  position: absolute;
  right: 11px;
  bottom: 9px;
  width: 352px;
}

.goal-text {
  display: flex;
  justify-content: space-between;
  padding: 0 2px;
  color: #fff;
  font-family: "Liberation Sans", sans-serif;
  font-size: 9px;
  line-height: 13px;
  text-shadow: 0 0 1px #777, 0 0 1px #777, 0 0 2px #999;
}

.goal-bar {
  height: 14px;
  padding: 2px;
  border: 2px solid #62b565;
  border-radius: 7px;
  background: #b0b0b0;
}

.goal-fill {
  width: 50%;
  height: 6px;
  border-radius: 3px;
  background: #fff;
}

.cursor {
  position: absolute;
  top: 189px;
  left: 481px;
  width: 10px;
  height: 14px;
}
```
